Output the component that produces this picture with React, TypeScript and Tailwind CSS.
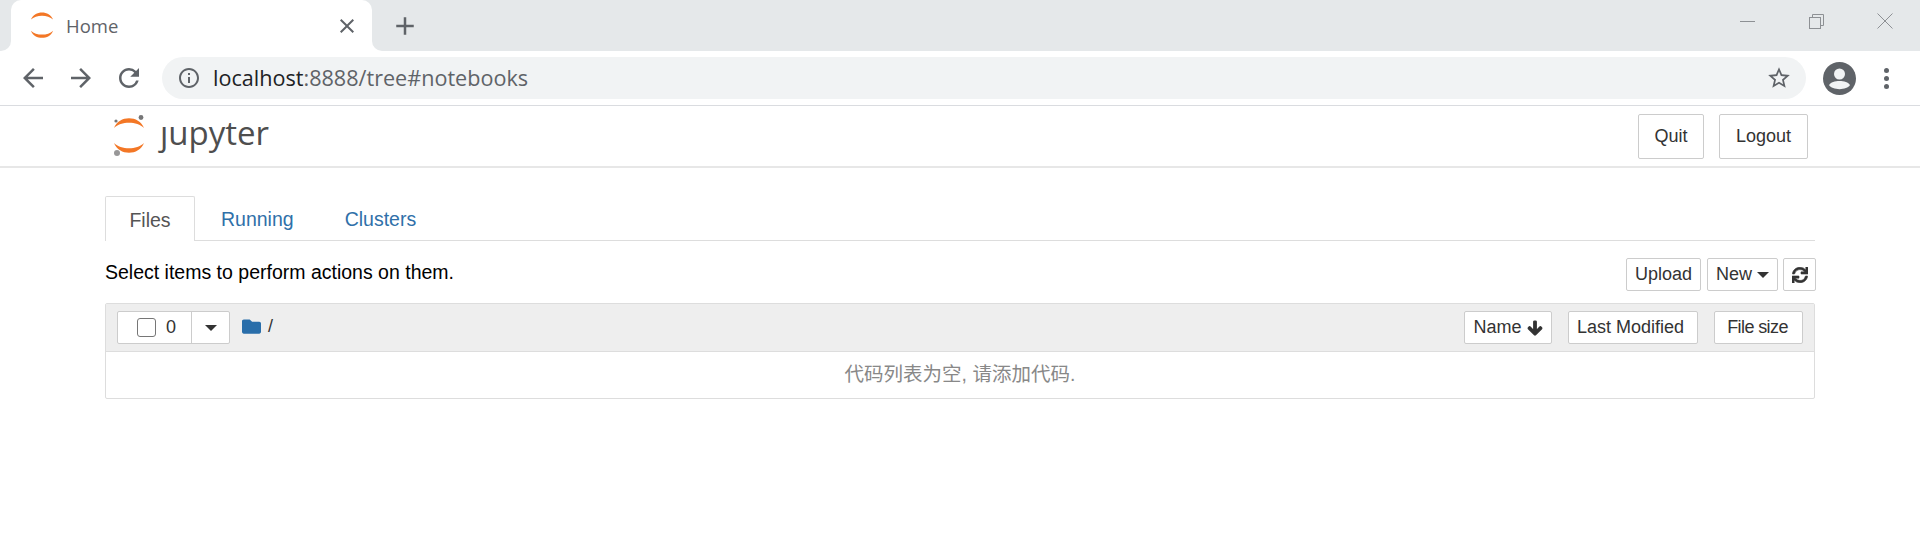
import React from 'react';
import { FaArrowDown, FaFolder, FaSync } from 'react-icons/fa';
import { MdAdd, MdArrowBack, MdArrowForward, MdClose, MdInfoOutline, MdRefresh, MdStarBorder } from 'react-icons/md';

const Caret: React.FC = () => (
    <span className="inline-block w-0 h-0 border-x-[6px] border-x-transparent border-t-[6px] border-t-[#333333]"></span>
);

const JupyterMark: React.FC<{ small?: boolean }> = ({ small }) => (
    <svg viewBox="0 0 32 42" className={small ? 'w-[24px] h-[31px]' : 'w-[32px] h-[42px]'}>
        <path d="M1 13 C6 0 26 0 31 13 C24 6 8 6 1 13 Z" fill="#f37726" />
        <path d="M1 28 C8 35 24 35 31 28 C26 41 6 41 1 28 Z" fill="#f37726" />
        {!small && (
            <>
                <circle cx="28" cy="2.5" r="2.4" fill="#767677" />
                <circle cx="3" cy="6" r="1.6" fill="#767677" />
                <circle cx="4" cy="38" r="3" fill="#989798" />
            </>
        )}
    </svg>
);

const Btn: React.FC<{ className?: string; children: React.ReactNode }> = ({ className, children }) => (
    <button className={`flex items-center justify-center bg-white border border-[#cccccc] rounded-[2px] text-[#333333] text-[18px] h-[33px] ${className ?? ''}`}>
        {children}
    </button>
);

const BrowserChrome: React.FC = () => (
    <>
        <div className="h-[51px] bg-[#e5e8ea] flex items-end pl-[11px] text-[#5f6368]">
            <div className="relative w-[361px] h-[51px] bg-white rounded-t-[10px] flex items-center pl-[19px] pr-[13px]">
                <span className="absolute bottom-0 -left-[10px] w-[10px] h-[10px] bg-white">
                    <span className="block w-full h-full bg-[#e5e8ea] rounded-br-[10px]"></span>
                </span>
                <span className="absolute bottom-0 -right-[10px] w-[10px] h-[10px] bg-white">
                    <span className="block w-full h-full bg-[#e5e8ea] rounded-bl-[10px]"></span>
                </span>
                <JupyterMark small />
                <span className="ml-[12px] text-[18.5px] text-[#5f6368] font-['Open_Sans',sans-serif]">Home</span>
                <MdClose className="ml-auto" size={24} />
            </div>
            <div className="h-[51px] flex items-center ml-[18px]">
                <MdAdd size={30} />
            </div>
            <div className="ml-auto flex items-center h-[51px] pb-[9px] text-[#8d9094]">
                <div className="w-[15px] h-px bg-[#8d9094] mr-[54px]"></div>
                <svg width="15" height="15" viewBox="0 0 15 15" fill="none" stroke="currentColor" className="mr-[53px]">
                    <rect x="0.5" y="3.5" width="11" height="11" />
                    <path d="M3.5 3.5V0.5H14.5V11.5H11.5" />
                </svg>
                <svg width="16" height="16" viewBox="0 0 16 16" fill="none" stroke="currentColor" className="mr-[27px]">
                    <path d="M0.5 0.5L15.5 15.5M15.5 0.5L0.5 15.5" />
                </svg>
            </div>
        </div>
        <div className="h-[55px] bg-white border-b border-[#dadce0] flex items-center text-[#5f6368]">
            <MdArrowBack className="ml-[18px]" size={30} />
            <MdArrowForward className="ml-[18px]" size={30} />
            <MdRefresh className="ml-[18px]" size={30} />
            <div className="ml-[18px] w-[1644px] h-[42px] rounded-full bg-[#f1f3f4] flex items-center pl-[15px] pr-[14px]">
                <MdInfoOutline size={24} />
                <span className="ml-[12px] text-[21.6px] font-['Open_Sans',sans-serif] text-[#5f6368]">
                    <span className="text-[#202124]">localhost</span>:8888/tree#notebooks
                </span>
                <MdStarBorder className="ml-auto" size={26} />
            </div>
            <svg width="33" height="33" viewBox="0 0 33 33" className="ml-[17px]">
                <circle cx="16.5" cy="16.5" r="16.5" fill="#5f6368" />
                <circle cx="16.5" cy="12" r="5.5" fill="#f1f3f4" />
                <path d="M6 23 C9 17.5 24 17.5 27 23 C24 28.5 9 28.5 6 23 Z" fill="#f1f3f4" />
            </svg>
            <div className="ml-[28px] flex flex-col gap-[3px]">
                <span className="w-[5px] h-[5px] rounded-full bg-[#5f6368]"></span>
                <span className="w-[5px] h-[5px] rounded-full bg-[#5f6368]"></span>
                <span className="w-[5px] h-[5px] rounded-full bg-[#5f6368]"></span>
            </div>
        </div>
    </>
);

const Header: React.FC = () => (
    <div className="h-[62px] border-b-2 border-[#e7e7e7] flex items-center pl-[113px] pr-[112px]">
        <JupyterMark />
        <span className="ml-[15px] -mt-[7px] text-[33px] leading-none text-[#4e4e4e] font-['Open_Sans',sans-serif]">ȷupyter</span>
        <div className="ml-auto flex gap-[15px] pt-[1px]">
            <Btn className="w-[66px] !h-[45px]">Quit</Btn>
            <Btn className="w-[89px] !h-[45px]">Logout</Btn>
        </div>
    </div>
);

const Tabs: React.FC = () => (
    <div className="h-[45px] border-b border-[#dddddd] flex text-[19.5px]">
        <div className="w-[90px] h-[45px] pt-[4px] border border-b-0 border-[#dddddd] rounded-t-[2px] bg-white text-[#555555] flex items-center justify-center">Files</div>
        <div className="ml-[26px] h-[44px] pt-[4px] text-[#2f70a9] flex items-center">Running</div>
        <div className="ml-[51px] h-[44px] pt-[4px] text-[#2f70a9] flex items-center">Clusters</div>
    </div>
);

const Toolbar: React.FC = () => (
    <div className="h-[62px] -mr-[1px] flex items-start justify-between">
        <p className="mt-[19px] text-[19.5px] leading-[25px] text-black">Select items to perform actions on them.</p>
        <div className="flex mt-[17px]">
            <Btn className="w-[75px]">Upload</Btn>
            <Btn className="w-[71px] ml-[6px] gap-[5px]">New <Caret /></Btn>
            <Btn className="w-[33px] ml-[5px]"><FaSync size={16} stroke="currentColor" strokeWidth={20} /></Btn>
        </div>
    </div>
);

const FileList: React.FC = () => (
    <div className="h-[96px] border border-[#dddddd] rounded-[2px]">
        <div className="h-[48px] bg-[#eeeeee] border-b border-[#dddddd] flex items-center pl-[11px] pr-[11px]">
            <div className="flex h-[33px] bg-white border border-[#cccccc] rounded-[2px]">
                <div className="w-[74px] border-r border-[#cccccc] flex items-center pl-[19px] gap-[10px] text-[#333333] text-[18px]">
                    <span className="w-[19px] h-[19px] rounded-[3px] border border-[#767676] bg-white"></span>
                    0
                </div>
                <div className="w-[37px] flex items-center justify-center"><Caret /></div>
            </div>
            <div className="flex items-center ml-[12px] mb-[3px] text-[#333333] text-[18px]">
                <FaFolder size={19} className="text-[#296eaa]" />
                <span className="ml-[7px]">/</span>
            </div>
            <div className="ml-auto flex gap-[16px]">
                <Btn className="w-[88px] gap-[5px]">Name <FaArrowDown size={16} stroke="currentColor" strokeWidth={40} /></Btn>
                <Btn className="w-[130px] pr-[5px]">Last Modified</Btn>
                <Btn className="w-[89px] pr-[2px] tracking-[-0.6px]">File size</Btn>
            </div>
        </div>
        <div className="h-[46px] flex items-center justify-center text-[19.5px] text-[#888888]">代码列表为空, 请添加代码.</div>
    </div>
);

const App: React.FC = () => (
    <div className="w-[1920px] h-[559px] overflow-hidden bg-white font-['Liberation_Sans','Noto_Sans_CJK_SC',sans-serif]">
        <BrowserChrome />
        <Header />
        <div className="pl-[105px] pr-[105px] pt-[28px]">
            <Tabs />
            <Toolbar />
            <FileList />
        </div>
    </div>
);

export default App;
